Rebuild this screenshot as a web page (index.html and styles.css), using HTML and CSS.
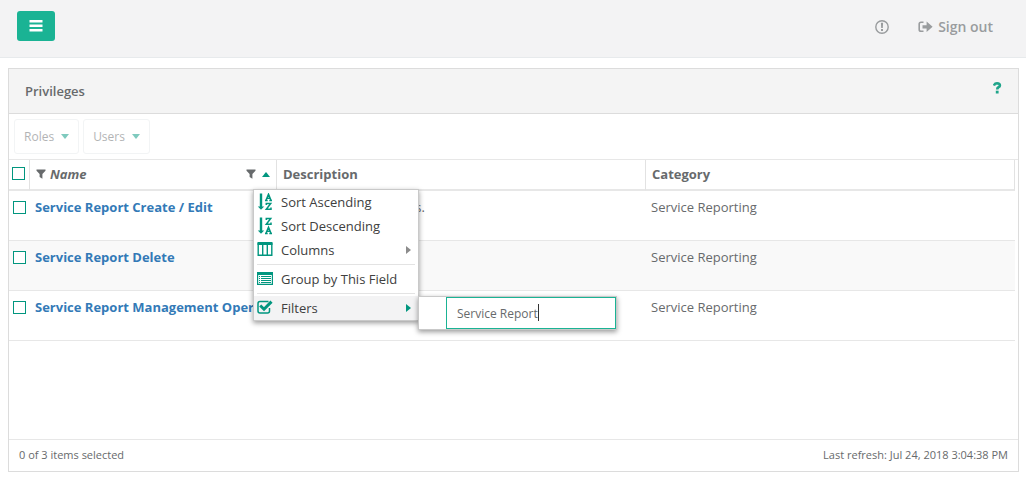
FILE: index.html
```html
<!DOCTYPE html>
<html lang="en">
<head>
    <meta charset="UTF-8">
    <meta name="viewport" content="width=device-width, initial-scale=1.0">
    <title>Privileges</title>
    <link rel="stylesheet" href="styles.css">
</head>
<body>
    <header class="topbar">
        <button class="nav-toggle" type="button" aria-label="Toggle navigation">
            <svg width="14" height="12" viewBox="0 0 14 12" fill="currentColor"><path d="M0.5 0h13v2.6H0.5zM0.5 4.5h13v2.6H0.5zM0.5 9h13v2.6H0.5z"/></svg>
        </button>
        <div class="topbar-links">
            <a class="topbar-link" href="#" aria-label="Notices">
                <svg width="14" height="14" viewBox="0 0 14 14"><circle cx="7" cy="7" r="6.2" fill="none" stroke="currentColor" stroke-width="1.4"/><path d="M5.9 2.8h2.2L7.8 8H6.2zM6 9h2v2H6z" fill="currentColor"/></svg>
            </a>
            <a class="topbar-link" href="#">
                <svg width="15" height="12" viewBox="0 0 15 12"><path d="M5.5 1.2H3Q1.2 1.2 1.2 3V8.5Q1.2 10.3 3 10.3H5.5" fill="none" stroke="currentColor" stroke-width="1.6"/><path d="M4.5 4.2H8.6V0.6L14.6 5.8L8.6 11V7.4H4.5z" fill="currentColor"/></svg>
                Sign out
            </a>
        </div>
    </header>

    <main class="panel">
        <div class="panel-header">
            <h1 class="panel-title">Privileges</h1>
            <a class="help" href="#" aria-label="Help">
                <svg width="9" height="12" viewBox="0 0 9 12"><path d="M0.9 3.6Q1.8 1.3 4 1.3Q6.9 1.4 6.9 3.5Q6.9 4.7 5.5 5.3Q4.2 5.9 4.2 7.6" fill="none" stroke="currentColor" stroke-width="2.6"/><path d="M2.8 8.7h2.8v2.8H2.8z" fill="currentColor"/></svg>
            </a>
        </div>

        <div class="toolbar">
            <button class="toolbar-button" type="button" disabled>Roles <span class="caret-down"></span></button>
            <button class="toolbar-button" type="button" disabled>Users <span class="caret-down"></span></button>
        </div>

        <div class="grid-wrap">
            <table class="grid">
                <colgroup>
                    <col class="col-check">
                    <col class="col-name">
                    <col>
                    <col>
                </colgroup>
                <thead>
                    <tr>
                        <th class="check-head"><input class="check" type="checkbox" aria-label="Select all"></th>
                        <th class="name-head">
                            <div class="head-content">
                                <svg class="funnel" width="10" height="10" viewBox="0 0 10 10" fill="currentColor"><path d="M0.5 0.5h9v1.2L6.4 5v4.8L3.6 8V5L0.5 1.7z"/></svg>
                                <em>Name</em>
                                <span class="head-tools">
                                    <svg class="funnel" width="10" height="10" viewBox="0 0 10 10" fill="currentColor"><path d="M0.5 0.5h9v1.2L6.4 5v4.8L3.6 8V5L0.5 1.7z"/></svg>
                                    <span class="caret-up"></span>
                                </span>
                            </div>

                            <ul class="menu">
                                <li class="menu-item">
                                    <svg width="16" height="18" viewBox="0 0 16 18"><path d="M2.8 0.5h2.4v13h2L4 16.8L0.8 13.500h2z" fill="currentColor"/><path d="M9 7.2L11.500 1.200L14 7.200M10 5.300h3M8 7.400h2.700M12.300 7.400h2.700M9.300 12V10.500H13.700L9.300 16.200H14V14.500" fill="none" stroke="currentColor" stroke-width="1.500"/></svg>
                                    <button class="menu-button" type="button">Sort Ascending</button>
                                </li>
                                <li class="menu-item">
                                    <svg width="16" height="18" viewBox="0 0 16 18"><path d="M2.8 0.5h2.4v13h2L4 16.8L0.8 13.500h2z" fill="currentColor"/><path d="M9.300 3V1.500H13.700L9.300 7.200H14V5.500M9 16.200L11.500 10.200L14 16.200M10 14.300h3M8 16.400h2.700M12.300 16.400h2.700" fill="none" stroke="currentColor" stroke-width="1.500"/></svg>
                                    <button class="menu-button" type="button">Sort Descending</button>
                                </li>
                                <li class="menu-item">
                                    <svg width="16" height="18" viewBox="0 0 16 18"><path d="M0.5 1h15v3h-15z" fill="currentColor"/><path d="M1.200 2v12.300h13.600V2M5.700 2v12M10.300 2v12" fill="none" stroke="currentColor" stroke-width="1.400"/></svg>
                                    <button class="menu-button" type="button">Columns</button>
                                    <span class="caret-right"></span>
                                </li>
                                <li class="menu-line"></li>
                                <li class="menu-item">
                                    <svg width="16" height="18" viewBox="0 0 16 18"><path d="M0 2h16v3H0z" fill="currentColor"/><path d="M0.600 3v11.400h14.800V3" fill="none" stroke="currentColor" stroke-width="1.200"/><path d="M2 6.500h1M4 6.500h10M2 8.500h1M4 8.500h10M2 10.500h1M4 10.500h10M2 12.500h1M4 12.500h10" stroke="currentColor"/></svg>
                                    <button class="menu-button" type="button">Group by This Field</button>
                                </li>
                                <li class="menu-line"></li>
                                <li class="menu-item active">
                                    <svg width="16" height="18" viewBox="0 0 16 18"><path d="M11.500 2.500H3Q1 2.500 1 4.500V12Q1 14 3 14H10.500Q12.500 14 12.500 12V9" fill="none" stroke="currentColor" stroke-width="1.500"/><path d="M3.200 6.500L7 10.200L14.500 2.600" fill="none" stroke="currentColor" stroke-width="3"/></svg>
                                    <button class="menu-button" type="button">Filters</button>
                                    <span class="caret-right"></span>
                                    <div class="submenu">
                                        <input class="filter-input" type="text" value="Service Report" aria-label="Filter by name">
                                        <span class="text-cursor"></span>
                                    </div>
                                </li>
                            </ul>
                        </th>
                        <th>Description</th>
                        <th>Category</th>
                    </tr>
                </thead>
                <tbody>
                    <tr>
                        <td class="check-cell"><input class="check" type="checkbox" aria-label="Service Report Create / Edit"></td>
                        <td><a class="name-link" href="#">Service Report Create / Edit</a></td>
                        <td>Creates service reports.</td>
                        <td>Service Reporting</td>
                    </tr>
                    <tr>
                        <td class="check-cell"><input class="check" type="checkbox" aria-label="Service Report Delete"></td>
                        <td><a class="name-link" href="#">Service Report Delete</a></td>
                        <td></td>
                        <td>Service Reporting</td>
                    </tr>
                    <tr>
                        <td class="check-cell"><input class="check" type="checkbox" aria-label="Service Report Management Operations"></td>
                        <td><a class="name-link" href="#">Service Report Management Oper</a></td>
                        <td></td>
                        <td>Service Reporting</td>
                    </tr>
                </tbody>
            </table>
        </div>

        <footer class="panel-footer">
            <span>0 of 3 items selected</span>
            <span>Last refresh: Jul 24, 2018 3:04:38 PM</span>
        </footer>
    </main>
</body>
</html>
```

FILE: styles.css
```css
*{
    box-sizing: border-box;
}
body{
    margin: 0;
    min-height: 100vh;
    display: flex;
    flex-direction: column;
    background-color: white;
    color: #676a6c;
    font-family: "Open Sans", sans-serif;
    font-size: 13px;
    line-height: 18px;
}
button, input{
    font-family: inherit;
    margin: 0;
}
a{
    text-decoration: none;
}
svg{
    display: block;
    flex: none;
}

/* top bar */
.topbar{
    display: flex;
    justify-content: space-between;
    align-items: flex-start;
    padding: 11px 33px 14px 17px;
    background-color: #f3f3f4;
    border-bottom: 1px solid #e7eaec;
}
.nav-toggle{
    display: flex;
    align-items: center;
    justify-content: center;
    width: 38px;
    height: 30px;
    padding: 0;
    border: none;
    border-radius: 3px;
    background-color: #1ab394;
    color: white;
}
.topbar-links{
    display: flex;
    align-items: center;
    gap: 29px;
    height: 32px;
}
.topbar-link{
    display: flex;
    align-items: center;
    gap: 5px;
    color: #999c9e;
    font-size: 14px;
    font-weight: 600;
}

/* panel */
.panel{
    flex: 1;
    display: flex;
    flex-direction: column;
    margin: 10px 7px 7px 8px;
    border: 1px solid #dcdcdc;
}
.panel-header{
    display: flex;
    justify-content: space-between;
    padding: 13px 16px;
    background-color: #f4f4f4;
    border-bottom: 1px solid #dcdcdc;
}
.panel-title{
    margin: 0;
    font-size: 13px;
    font-weight: 600;
}
.help{
    color: #1fa58a;
}
.toolbar{
    display: flex;
    gap: 4px;
    padding: 5px;
    border-bottom: 1px solid #e7e7e7;
}
.toolbar-button{
    display: flex;
    align-items: center;
    gap: 7px;
    height: 35px;
    padding: 0 9px;
    border: 1px solid #e7eaec;
    border-radius: 3px;
    background-color: white;
    color: #676a6c;
    font-size: 12px;
    opacity: 0.5;
}
.caret-down{
    border-left: 4px solid transparent;
    border-right: 4px solid transparent;
    border-top: 5px solid #01967f;
}
.caret-up{
    border-left: 4px solid transparent;
    border-right: 4px solid transparent;
    border-bottom: 5px solid #01967f;
}
.caret-right{
    margin-left: auto;
    border-top: 4px solid transparent;
    border-bottom: 4px solid transparent;
    border-left: 5px solid #8c8c8c;
}

/* grid */
.grid-wrap{
    flex: 1;
    padding-right: 3px;
}
.grid{
    width: 100%;
    table-layout: fixed;
    border-collapse: separate;
    border-spacing: 0;
}
.col-check{
    width: 21px;
}
.col-name{
    width: 247px;
}
.grid th{
    height: 31px;
    padding: 0 6px 1px;
    border-right: 1px solid #e2e2e2;
    border-bottom: 2px solid #e7e7e7;
    font-weight: 700;
    text-align: left;
}
.grid td{
    height: 50px;
    padding: 7px 5px;
    border-bottom: 1px solid #e7e7e7;
    vertical-align: top;
    white-space: nowrap;
    overflow: hidden;
}
.grid tbody tr:nth-child(even){
    background-color: #f9f9f9;
}
.grid .check-head{
    padding: 0 3px 2px;
}
.grid .check-cell{
    padding: 10px 4px;
}
.check{
    display: block;
    appearance: none;
    width: 13px;
    height: 13px;
    border: 1px solid #01967f;
    background-color: white;
}
.name-link{
    color: #337ab7;
    font-weight: 700;
}
.name-head{
    position: relative;
}
.head-content{
    display: flex;
    align-items: center;
    gap: 4px;
}
.head-tools{
    display: flex;
    align-items: center;
    gap: 6px;
    margin-left: auto;
}

/* column menu */
.menu{
    position: absolute;
    top: 29px;
    left: 223px;
    z-index: 1;
    width: 166px;
    margin: 0;
    padding: 0;
    border: 1px solid #c9c9c9;
    background-color: white;
    box-shadow: 0 2px 5px rgba(0,0,0,0.4);
    list-style: none;
    font-weight: 400;
}
.menu-item{
    position: relative;
    display: flex;
    align-items: center;
    gap: 8px;
    height: 24px;
    padding: 0 7px 0 3px;
    color: #01967f;
}
.menu-button{
    padding: 0;
    border: none;
    background: none;
    color: #404040;
    font-size: 13px;
    line-height: 18px;
    white-space: nowrap;
}
.menu-line{
    height: 1px;
    margin: 2px 3px;
    background-color: #e3e3e3;
}
.active{
    background-color: #f3f3f4;
}
.active .caret-right{
    border-left-color: #01967f;
}
.submenu{
    position: absolute;
    top: 0;
    left: 100%;
    padding-left: 27px;
    border: 1px solid #c9c9c9;
    background-color: white;
    box-shadow: 0 2px 5px rgba(0,0,0,0.4);
}
.filter-input{
    display: block;
    width: 170px;
    height: 32px;
    padding: 0 10px;
    border: 1px solid #1ab394;
    border-radius: 0;
    background-color: white;
    color: #676a6c;
    font-size: 12px;
    outline: none;
}
.text-cursor{
    position: absolute;
    top: 7px;
    left: 119px;
    width: 1px;
    height: 17px;
    background-color: #333333;
}

/* footer */
.panel-footer{
    display: flex;
    justify-content: space-between;
    padding: 6px 10px 7px;
    border-top: 1px solid #e7e7e7;
    font-size: 11px;
}
```
